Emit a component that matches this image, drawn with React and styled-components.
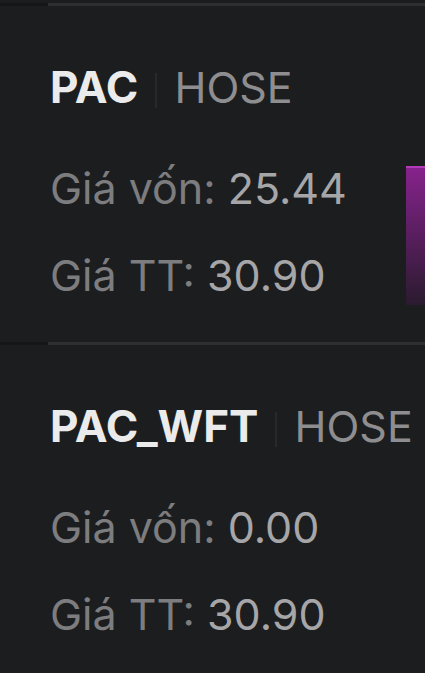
import styled, { createGlobalStyle } from 'styled-components';

const GlobalStyle = createGlobalStyle`
  html, body {
    margin: 0;
    padding: 0;
    background: #1c1d1f;
    overflow: hidden;
  }
  body {
    font-family: Inter, "Noto Sans", sans-serif;
    -webkit-font-smoothing: antialiased;
  }
`;

const holdings = [
  { code: 'PAC', exchange: 'HOSE', cost: '25.44', market: '30.90', chart: true },
  { code: 'PAC_WFT', exchange: 'HOSE', cost: '0.00', market: '30.90', chart: false },
];

function HoldingRow({ item }) {
  return (
    <Section>
      <Divider />
      <Body>
        <Info>
          <Header>
            <Code>{item.code}</Code>
            <Sep />
            <Exchange>{item.exchange}</Exchange>
          </Header>
          <Line $gap={57}>
            <Label>Giá vốn: </Label>
            <Value>{item.cost}</Value>
          </Line>
          <Line $gap={43}>
            <Label>Giá TT: </Label>
            <Value>{item.market}</Value>
          </Line>
        </Info>
        {item.chart && (
          <ChartCol>
            <Bar />
          </ChartCol>
        )}
      </Body>
    </Section>
  );
}

export default function App() {
  return (
    <>
      <GlobalStyle />
      <Page>
        {holdings.map(h => (
          <HoldingRow key={h.code} item={h} />
        ))}
      </Page>
    </>
  );
}

const Page = styled.div`
  padding-top: 3px;
  width: 425px;
  overflow: hidden;
`;

const Section = styled.div`
  display: flex;
  flex-direction: column;
`;

const Divider = styled.div`
  height: 3px;
  background: linear-gradient(to right, #151618 48px, #2e2f31 48px);
`;

const Body = styled.div`
  display: flex;
  padding-left: 50px;
  padding-bottom: 37px;
`;

const Info = styled.div`
  flex: 0 0 356px;
  display: flex;
  flex-direction: column;
`;

const Header = styled.div`
  display: flex;
  align-items: center;
  margin-top: 59px;
  height: 44px;
  white-space: nowrap;
`;

const Code = styled.span`
  font-size: 44px;
  line-height: 44px;
  font-weight: 700;
  color: #ebebeb;
`;

const Sep = styled.span`
  width: 2px;
  height: 35px;
  margin: 6px 17px 0 17px;
  background: #28292b;
`;

const Exchange = styled.span`
  font-size: 43px;
  line-height: 44px;
  font-weight: 400;
  color: #8e8e90;
`;

const Line = styled.div`
  margin-top: ${p => p.$gap}px;
  font-size: 43px;
  line-height: 44px;
  white-space: nowrap;
`;

const Label = styled.span`
  color: #7d7d7f;
`;

const Value = styled.span`
  color: #a6a6a8;
`;

const ChartCol = styled.div`
  flex: 0 0 40px;
  padding-top: 160px;
`;

const Bar = styled.div`
  height: 137px;
  border-top: 2px solid #b23ab9;
  background: linear-gradient(to bottom, #86228c, #2a1b2f);
`;
